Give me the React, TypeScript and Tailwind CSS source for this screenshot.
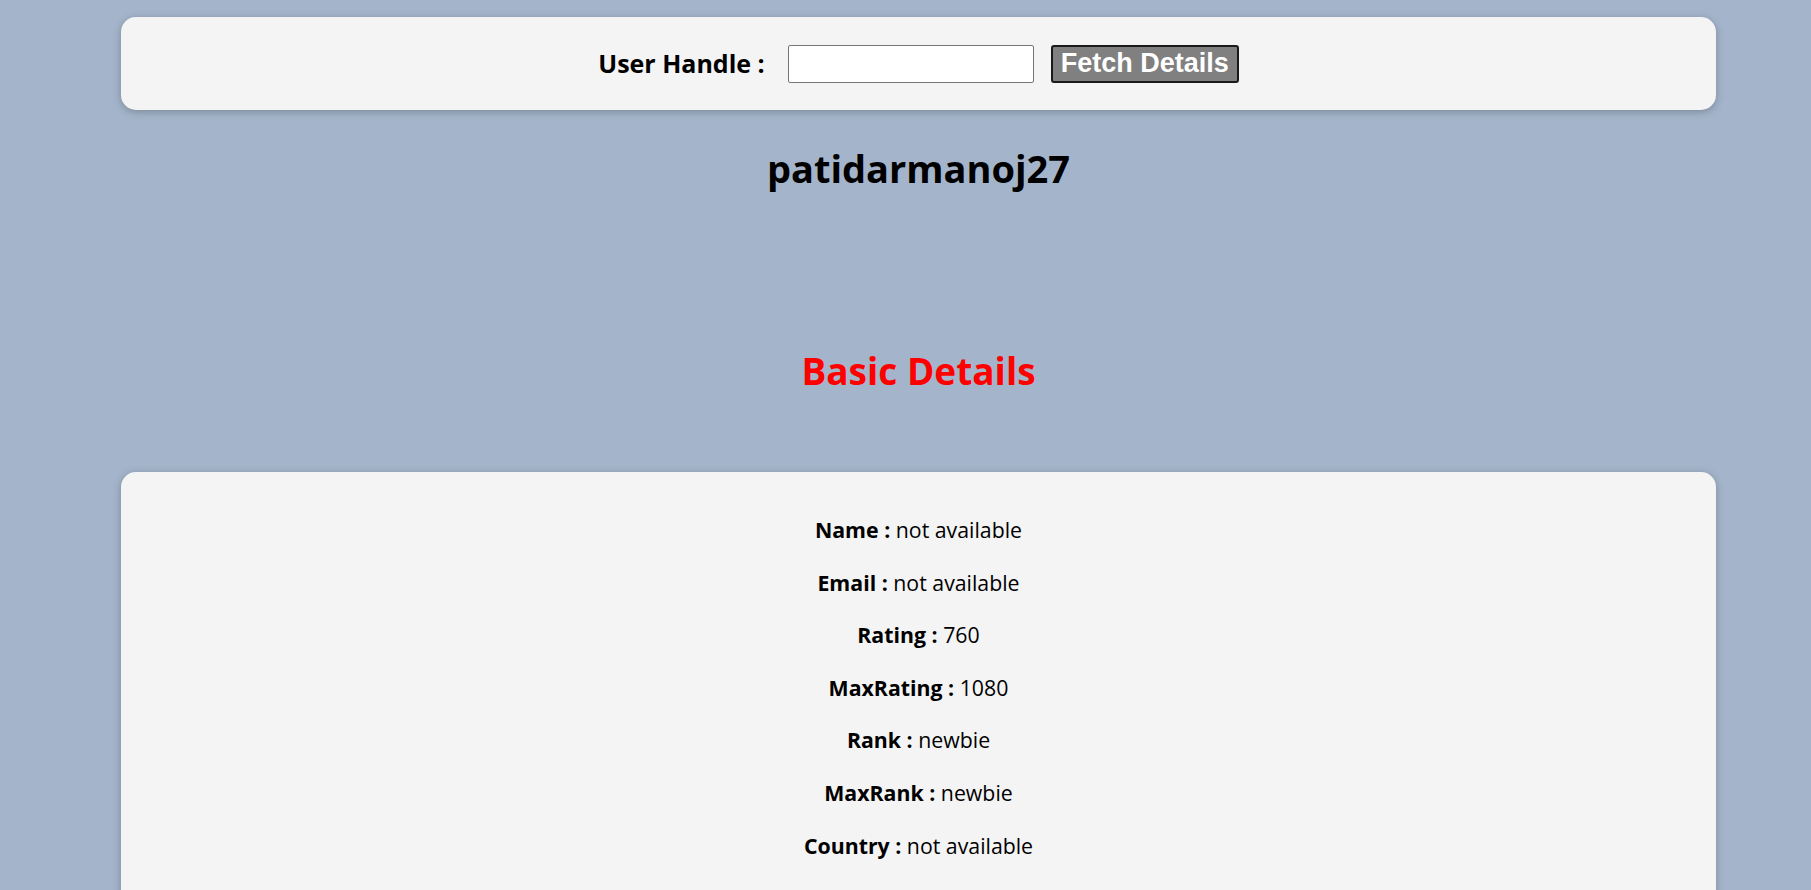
import { useState } from "react";

const details = [
  { label: "Name", value: "not available" },
  { label: "Email", value: "not available" },
  { label: "Rating", value: "760" },
  { label: "MaxRating", value: "1080" },
  { label: "Rank", value: "newbie" },
  { label: "MaxRank", value: "newbie" },
  { label: "Country", value: "not available" },
  { label: "City", value: "not available" },
  { label: "Organization", value: "not available" },
  { label: "Contribution", value: "0" },
];

export default function App() {
  const [handle, setHandle] = useState("");

  return (
    <div
      className="h-screen overflow-hidden bg-[#a4b5cb] text-black pl-[121px] pr-[95px] pt-[17px]"
      style={{ fontFamily: '"Open Sans", "Noto Sans", sans-serif' }}
    >
      {/* search bar */}
      <div className="h-[93px] bg-[#f4f4f4] rounded-[15px] shadow-[0_2px_8px_rgba(0,0,0,0.25)] flex items-center justify-center">
        <label htmlFor="handle" className="text-[25px] font-bold mr-[23px]">
          User Handle :
        </label>
        <input
          id="handle"
          value={handle}
          onChange={(e) => setHandle(e.target.value)}
          className="w-[246px] h-[38px] bg-white border border-[#767676] rounded-[2px] px-2 outline-none"
        />
        <button
          className="ml-[17px] w-[188px] h-[38px] bg-[#808080] border-2 border-[#1a1a1a] rounded-[3px] text-white font-bold text-[27px] leading-none"
          style={{ fontFamily: '"Liberation Sans", Arial, sans-serif' }}
        >
          Fetch Details
        </button>
      </div>

      <h2 className="mt-[34px] text-center text-[38px] font-bold leading-[48px]">
        patidarmanoj27
      </h2>

      <h1 className="mt-[151px] text-center text-[37px] font-bold leading-[56px] text-[#ff0000]">
        Basic Details
      </h1>

      {/* details card */}
      <div className="mt-[73px] bg-[#f4f4f4] rounded-[15px] shadow-[0_2px_8px_rgba(0,0,0,0.25)] pt-[43px] pb-10 flex flex-col items-center gap-[22.6px]">
        {details.map((d) => (
          <p key={d.label} className="text-[21.3px] leading-[30px]">
            <span className="font-bold">{d.label} :</span> {d.value}
          </p>
        ))}
      </div>
    </div>
  );
}
